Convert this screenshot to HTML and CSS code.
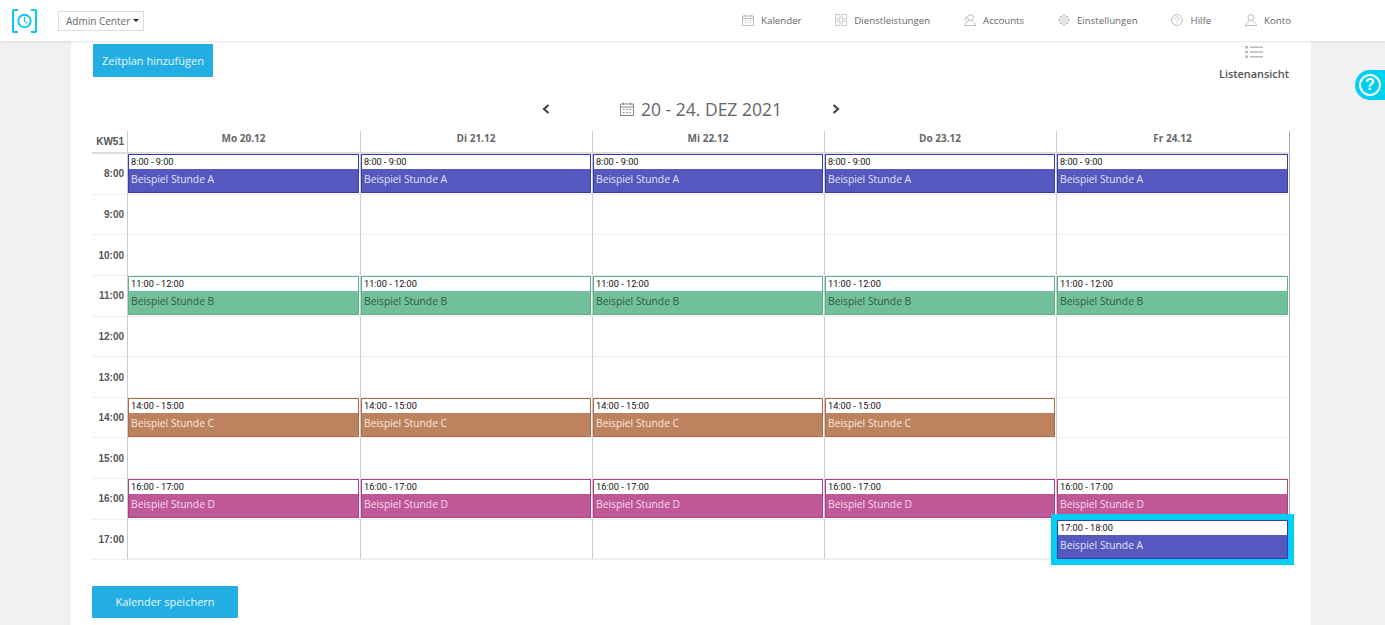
FILE: index.html
```html
<!DOCTYPE html>
<html lang="de">
<head>
<meta charset="utf-8">
<title>Kalender</title>
<link rel="stylesheet" href="styles.css">
</head>
<body>
<header class="topbar">
  <div class="brand">
    <svg class="logo" viewBox="0 0 25 24" width="25" height="24" fill="none" stroke="#12c8f2"><path d="M6 1H2Q1 1 1 2V22Q1 23 2 23H6M19 1H23Q24 1 24 2V22Q24 23 23 23H19" stroke-width="2.200"/><circle cx="12.500" cy="12" r="6.200" stroke-width="2"/><path d="M12.500 8V12.300L15 14" stroke-width="1.200"/></svg>
    <div class="select">Admin Center<span class="caret"></span></div>
  </div>
  <nav class="nav">
    <a class="nav-item"><svg viewBox="0 0 12 12" width="12" height="12" fill="none" stroke="#aaa" stroke-width=".8"><path d="M.5 2h11v9.500H.5zM.5 4.500h11M3 .5v2M9 .5v2M3 6.500h1M5.500 6.500h1M8 6.500h1M3 8.500h1M5.500 8.500h1M8 8.500h1"/></svg>Kalender</a>
    <a class="nav-item"><svg viewBox="0 0 12 12" width="12" height="12" fill="none" stroke="#bbb" stroke-width=".8"><path d="M.5.5h4.500v4.500H.5zM7 .5h4.500v4.500H7zM.5 7h4.500v4.500H.5zM7 7h4.500v4.500H7z"/></svg>Dienstleistungen</a>
    <a class="nav-item"><svg viewBox="0 0 12 12" width="12" height="12" fill="none" stroke="#aaa" stroke-width=".8"><circle cx="6.500" cy="3.600" r="2.900"/><path d="M4.800 6.200C4.600 8 .8 8.400.8 11.500h11C11.800 8.400 8.400 8 8.200 6.200M3 2.500C1 3.500 1 6 2.500 7"/></svg>Accounts</a>
    <a class="nav-item"><svg viewBox="0 0 12 12" width="12" height="12" fill="none" stroke="#aaa" stroke-width=".8"><circle cx="6" cy="6" r="2"/><circle cx="6" cy="6" r="4.200"/><path d="M6 .3v1.500M6 10.200v1.500M.3 6h1.500M10.200 6h1.500M2 2l1 1M9 9l1 1M2 10l1-1M9 3l1-1"/></svg>Einstellungen</a>
    <a class="nav-item"><svg viewBox="0 0 12 12" width="12" height="12" fill="none" stroke="#aaa" stroke-width=".8"><circle cx="6" cy="6" r="5.400"/><path d="M4.300 4.700C4.300 2.600 7.800 2.600 7.800 4.600C7.800 5.900 6 5.900 6 7.300M6 8.300v1"/></svg>Hilfe</a>
    <a class="nav-item"><svg viewBox="0 0 12 12" width="12" height="12" fill="none" stroke="#aaa" stroke-width=".8"><circle cx="6" cy="3.600" r="3"/><path d="M4.300 6.200C4.100 8 .5 8.400.5 11.500h11C11.500 8.400 7.900 8 7.700 6.200"/></svg>Konto</a>
  </nav>
</header>

<main class="page">
  <div class="toolbar">
    <button class="btn btn-add">Zeitplan hinzufügen</button>
    <div class="listview">
      <svg viewBox="0 0 18 12" width="18" height="12" fill="#bbb"><path d="M0 0h3v2.400H0zM5 .4h13v1.600H5zM0 4.800h3v2.400H0zM5 5.200h13v1.600H5zM0 9.600h3V12H0zM5 10h13v1.600H5z"/></svg>
      <span>Listenansicht</span>
    </div>
  </div>

  <div class="weeknav">
    <svg class="chev chev-prev" viewBox="0 0 8 10" width="8" height="10" fill="none" stroke="#444" stroke-width="2.200"><path d="M6.500 1L2 5l4.500 4"/></svg>
    <div class="weektitle">
      <svg viewBox="0 0 14 14" width="14" height="14" fill="none" stroke="#777" stroke-width=".9"><path d="M.5 2h13v11.500H.5zM.5 5h13M3.500 .5v2.500M10.500 .5v2.500M3 7.500h1.500M6.300 7.500h1.500M9.500 7.500h1.500M3 10.500h1.500M6.300 10.500h1.500M9.500 10.500h1.500"/></svg>
      <span>20 - 24. DEZ 2021</span>
    </div>
    <svg class="chev" viewBox="0 0 8 10" width="8" height="10" fill="none" stroke="#444" stroke-width="2.200"><path d="M1.500 1L6 5 1.500 9"/></svg>
  </div>

  <div class="cal">
    <div class="kw">KW51</div>
    <div class="dayhead">Mo 20.12</div>
    <div class="dayhead">Di 21.12</div>
    <div class="dayhead">Mi 22.12</div>
    <div class="dayhead">Do 23.12</div>
    <div class="dayhead dayhead-last">Fr 24.12</div>

    <div class="hour">8:00</div>
    <div class="cell"><div class="ev ev-a"><div class="ev-time">8:00 - 9:00</div><div class="ev-name">Beispiel Stunde A</div></div></div>
    <div class="cell"><div class="ev ev-a"><div class="ev-time">8:00 - 9:00</div><div class="ev-name">Beispiel Stunde A</div></div></div>
    <div class="cell"><div class="ev ev-a"><div class="ev-time">8:00 - 9:00</div><div class="ev-name">Beispiel Stunde A</div></div></div>
    <div class="cell"><div class="ev ev-a"><div class="ev-time">8:00 - 9:00</div><div class="ev-name">Beispiel Stunde A</div></div></div>
    <div class="cell cell-last"><div class="ev ev-a"><div class="ev-time">8:00 - 9:00</div><div class="ev-name">Beispiel Stunde A</div></div></div>

    <div class="hour">9:00</div>
    <div class="cell"></div><div class="cell"></div><div class="cell"></div><div class="cell"></div><div class="cell cell-last"></div>

    <div class="hour">10:00</div>
    <div class="cell"></div><div class="cell"></div><div class="cell"></div><div class="cell"></div><div class="cell cell-last"></div>

    <div class="hour">11:00</div>
    <div class="cell"><div class="ev ev-b"><div class="ev-time">11:00 - 12:00</div><div class="ev-name">Beispiel Stunde B</div></div></div>
    <div class="cell"><div class="ev ev-b"><div class="ev-time">11:00 - 12:00</div><div class="ev-name">Beispiel Stunde B</div></div></div>
    <div class="cell"><div class="ev ev-b"><div class="ev-time">11:00 - 12:00</div><div class="ev-name">Beispiel Stunde B</div></div></div>
    <div class="cell"><div class="ev ev-b"><div class="ev-time">11:00 - 12:00</div><div class="ev-name">Beispiel Stunde B</div></div></div>
    <div class="cell cell-last"><div class="ev ev-b"><div class="ev-time">11:00 - 12:00</div><div class="ev-name">Beispiel Stunde B</div></div></div>

    <div class="hour">12:00</div>
    <div class="cell"></div><div class="cell"></div><div class="cell"></div><div class="cell"></div><div class="cell cell-last"></div>

    <div class="hour">13:00</div>
    <div class="cell"></div><div class="cell"></div><div class="cell"></div><div class="cell"></div><div class="cell cell-last"></div>

    <div class="hour">14:00</div>
    <div class="cell"><div class="ev ev-c"><div class="ev-time">14:00 - 15:00</div><div class="ev-name">Beispiel Stunde C</div></div></div>
    <div class="cell"><div class="ev ev-c"><div class="ev-time">14:00 - 15:00</div><div class="ev-name">Beispiel Stunde C</div></div></div>
    <div class="cell"><div class="ev ev-c"><div class="ev-time">14:00 - 15:00</div><div class="ev-name">Beispiel Stunde C</div></div></div>
    <div class="cell"><div class="ev ev-c"><div class="ev-time">14:00 - 15:00</div><div class="ev-name">Beispiel Stunde C</div></div></div>
    <div class="cell cell-last"></div>

    <div class="hour">15:00</div>
    <div class="cell"></div><div class="cell"></div><div class="cell"></div><div class="cell"></div><div class="cell cell-last"></div>

    <div class="hour">16:00</div>
    <div class="cell"><div class="ev ev-d"><div class="ev-time">16:00 - 17:00</div><div class="ev-name">Beispiel Stunde D</div></div></div>
    <div class="cell"><div class="ev ev-d"><div class="ev-time">16:00 - 17:00</div><div class="ev-name">Beispiel Stunde D</div></div></div>
    <div class="cell"><div class="ev ev-d"><div class="ev-time">16:00 - 17:00</div><div class="ev-name">Beispiel Stunde D</div></div></div>
    <div class="cell"><div class="ev ev-d"><div class="ev-time">16:00 - 17:00</div><div class="ev-name">Beispiel Stunde D</div></div></div>
    <div class="cell cell-last"><div class="ev ev-d"><div class="ev-time">16:00 - 17:00</div><div class="ev-name">Beispiel Stunde D</div></div></div>

    <div class="hour">17:00</div>
    <div class="cell"></div><div class="cell"></div><div class="cell"></div><div class="cell"></div>
    <div class="cell cell-last"><div class="ev ev-a ev-focus"><div class="ev-time">17:00 - 18:00</div><div class="ev-name">Beispiel Stunde A</div></div></div>
  </div>

  <button class="btn btn-save">Kalender speichern</button>
</main>

<a class="helptab"><span class="helpcircle">?</span></a>
</body>
</html>
```

FILE: styles.css
```css
* { box-sizing: border-box; }
html, body { margin: 0; height: 625px; overflow: hidden; }
body {
  background: #f1f1f1;
  font-family: "Open Sans", "Liberation Sans", sans-serif;
  color: #666;
  position: relative;
}

.topbar {
  height: 41px;
  background: #fff;
  box-shadow: 0 1px 3px rgba(0,0,0,.1);
  display: flex;
  align-items: center;
  justify-content: space-between;
  padding: 0 94px 0 12px;
  position: relative;
}
.brand { display: flex; align-items: center; gap: 21px; }
.logo { display: block; }
.select {
  width: 86px;
  height: 20px;
  border: 1px solid #ddd;
  font-size: 10px;
  color: #666;
  display: flex;
  align-items: center;
  padding-left: 7px;
  white-space: nowrap;
}
.caret {
  border: 3px solid transparent;
  border-top: 3.500px solid #222;
  border-bottom: 0;
  margin-left: 3px;
}
.nav { display: flex; gap: 33.800px; padding-bottom: 1px; }
.nav-item {
  display: flex;
  align-items: center;
  gap: 7px;
  font-size: 9.700px;
  font-weight: 400;
  color: #666;
  white-space: nowrap;
}
.nav-item svg { display: block; }

.page {
  width: 1240px;
  height: 584px;
  margin-left: 71px;
  background: #fff;
  padding: 3px 21px 0;
}
.toolbar {
  display: flex;
  justify-content: space-between;
  align-items: flex-start;
  padding-left: 1px;
  height: 49px;
}
.btn {
  display: block;
  border: 0;
  background: #23aee3;
  color: #eaf7fd;
  font-family: inherit;
  font-size: 11px;
  font-weight: 400;
  border-radius: 1px;
  padding: 0;
}
.btn-add { width: 120px; height: 33px; }
.btn-save { width: 146px; height: 32px; margin-top: 25.500px; }
.listview {
  display: flex;
  flex-direction: column;
  align-items: flex-end;
  gap: 8px;
  font-size: 10.900px;
  font-weight: 600;
  color: #555;
  padding-top: 2px;
  margin-right: 1px;
}
.listview svg { margin-right: 26px; display: block; }

.weeknav {
  height: 22px;
  margin-top: 5px;
  display: flex;
  align-items: center;
  justify-content: center;
  gap: 50px;
}
.chev { display: block; }
.chev-prev { margin-right: 20px; }
.weektitle {
  display: flex;
  align-items: center;
  gap: 7px;
  font-size: 17.500px;
  color: #666;
  line-height: 22px;
  white-space: nowrap;
}
.weektitle svg { display: block; }

.cal {
  display: grid;
  grid-template-columns: 35px 233px repeat(3, 232px) 234px;
  grid-template-rows: 23px repeat(10, 40.650px);
  margin-top: 11px;
  width: 1198px;
}
.kw, .hour {
  font-family: "Liberation Sans", Arial, sans-serif;
  font-weight: 700;
  font-size: 10px;
  color: #555;
  text-align: right;
  padding-right: 3px;
  display: flex;
  align-items: center;
  justify-content: flex-end;
  border-bottom: 1px solid #eee;
}
.kw { border-bottom: 2px solid #ddd; }
.dayhead {
  font-size: 10px;
  font-weight: 700;
  color: #666;
  text-align: center;
  line-height: 14px;
  padding-right: 1px;
  border-left: 1px solid #ccc;
  border-bottom: 2px solid #ddd;
}
.dayhead-last { border-right: 1px solid #aaa; }
.cell {
  border-left: 1px solid #ccc;
  border-bottom: 1px solid #eee;
  min-width: 0;
}
.cell-last { border-right: 1px solid #aaa; }
.hour:last-of-type, .cell:nth-last-child(-n+5) { border-bottom-width: 2px; }

.ev {
  height: 39px;
  border: 1px solid;
  margin-right: 1px;
  display: flex;
  flex-direction: column;
}
.ev-time {
  background: #fff;
  height: 14px;
  flex: none;
  font-family: Roboto, "Liberation Sans", sans-serif;
  font-size: 9.200px;
  line-height: 14px;
  color: #111;
  padding-left: 2px;
}
.ev-name {
  flex: 1;
  font-size: 10.300px;
  line-height: 20px;
  padding-left: 2px;
  white-space: nowrap;
}
.ev-a { border-color: #3a3ab0; }
.ev-a .ev-name { background: #5558bf; color: #e3e3f6; }
.ev-b { border-color: #5cb08a; }
.ev-b .ev-name { background: #72c09b; color: #2f5b47; }
.ev-c { border-color: #ad6c45; }
.ev-c .ev-name { background: #bd825e; color: #f7e9df; }
.ev-d { border-color: #ac3d80; }
.ev-d .ev-name { background: #bf5896; color: #f6dcec; }
.ev-focus {
  outline: 6px solid #00cff5;
  position: relative;
}

.helptab {
  position: absolute;
  right: 0;
  top: 70px;
  width: 30px;
  height: 30px;
  background: #00cff5;
  border-radius: 15px 0 0 15px;
  display: flex;
  align-items: center;
  justify-content: center;
}
.helpcircle {
  width: 22px;
  height: 22px;
  border: 2px solid #fff;
  border-radius: 50%;
  color: #fff;
  font-size: 16px;
  font-weight: 700;
  line-height: 18px;
  text-align: center;
  font-family: "Liberation Sans", Arial, sans-serif;
}
```
